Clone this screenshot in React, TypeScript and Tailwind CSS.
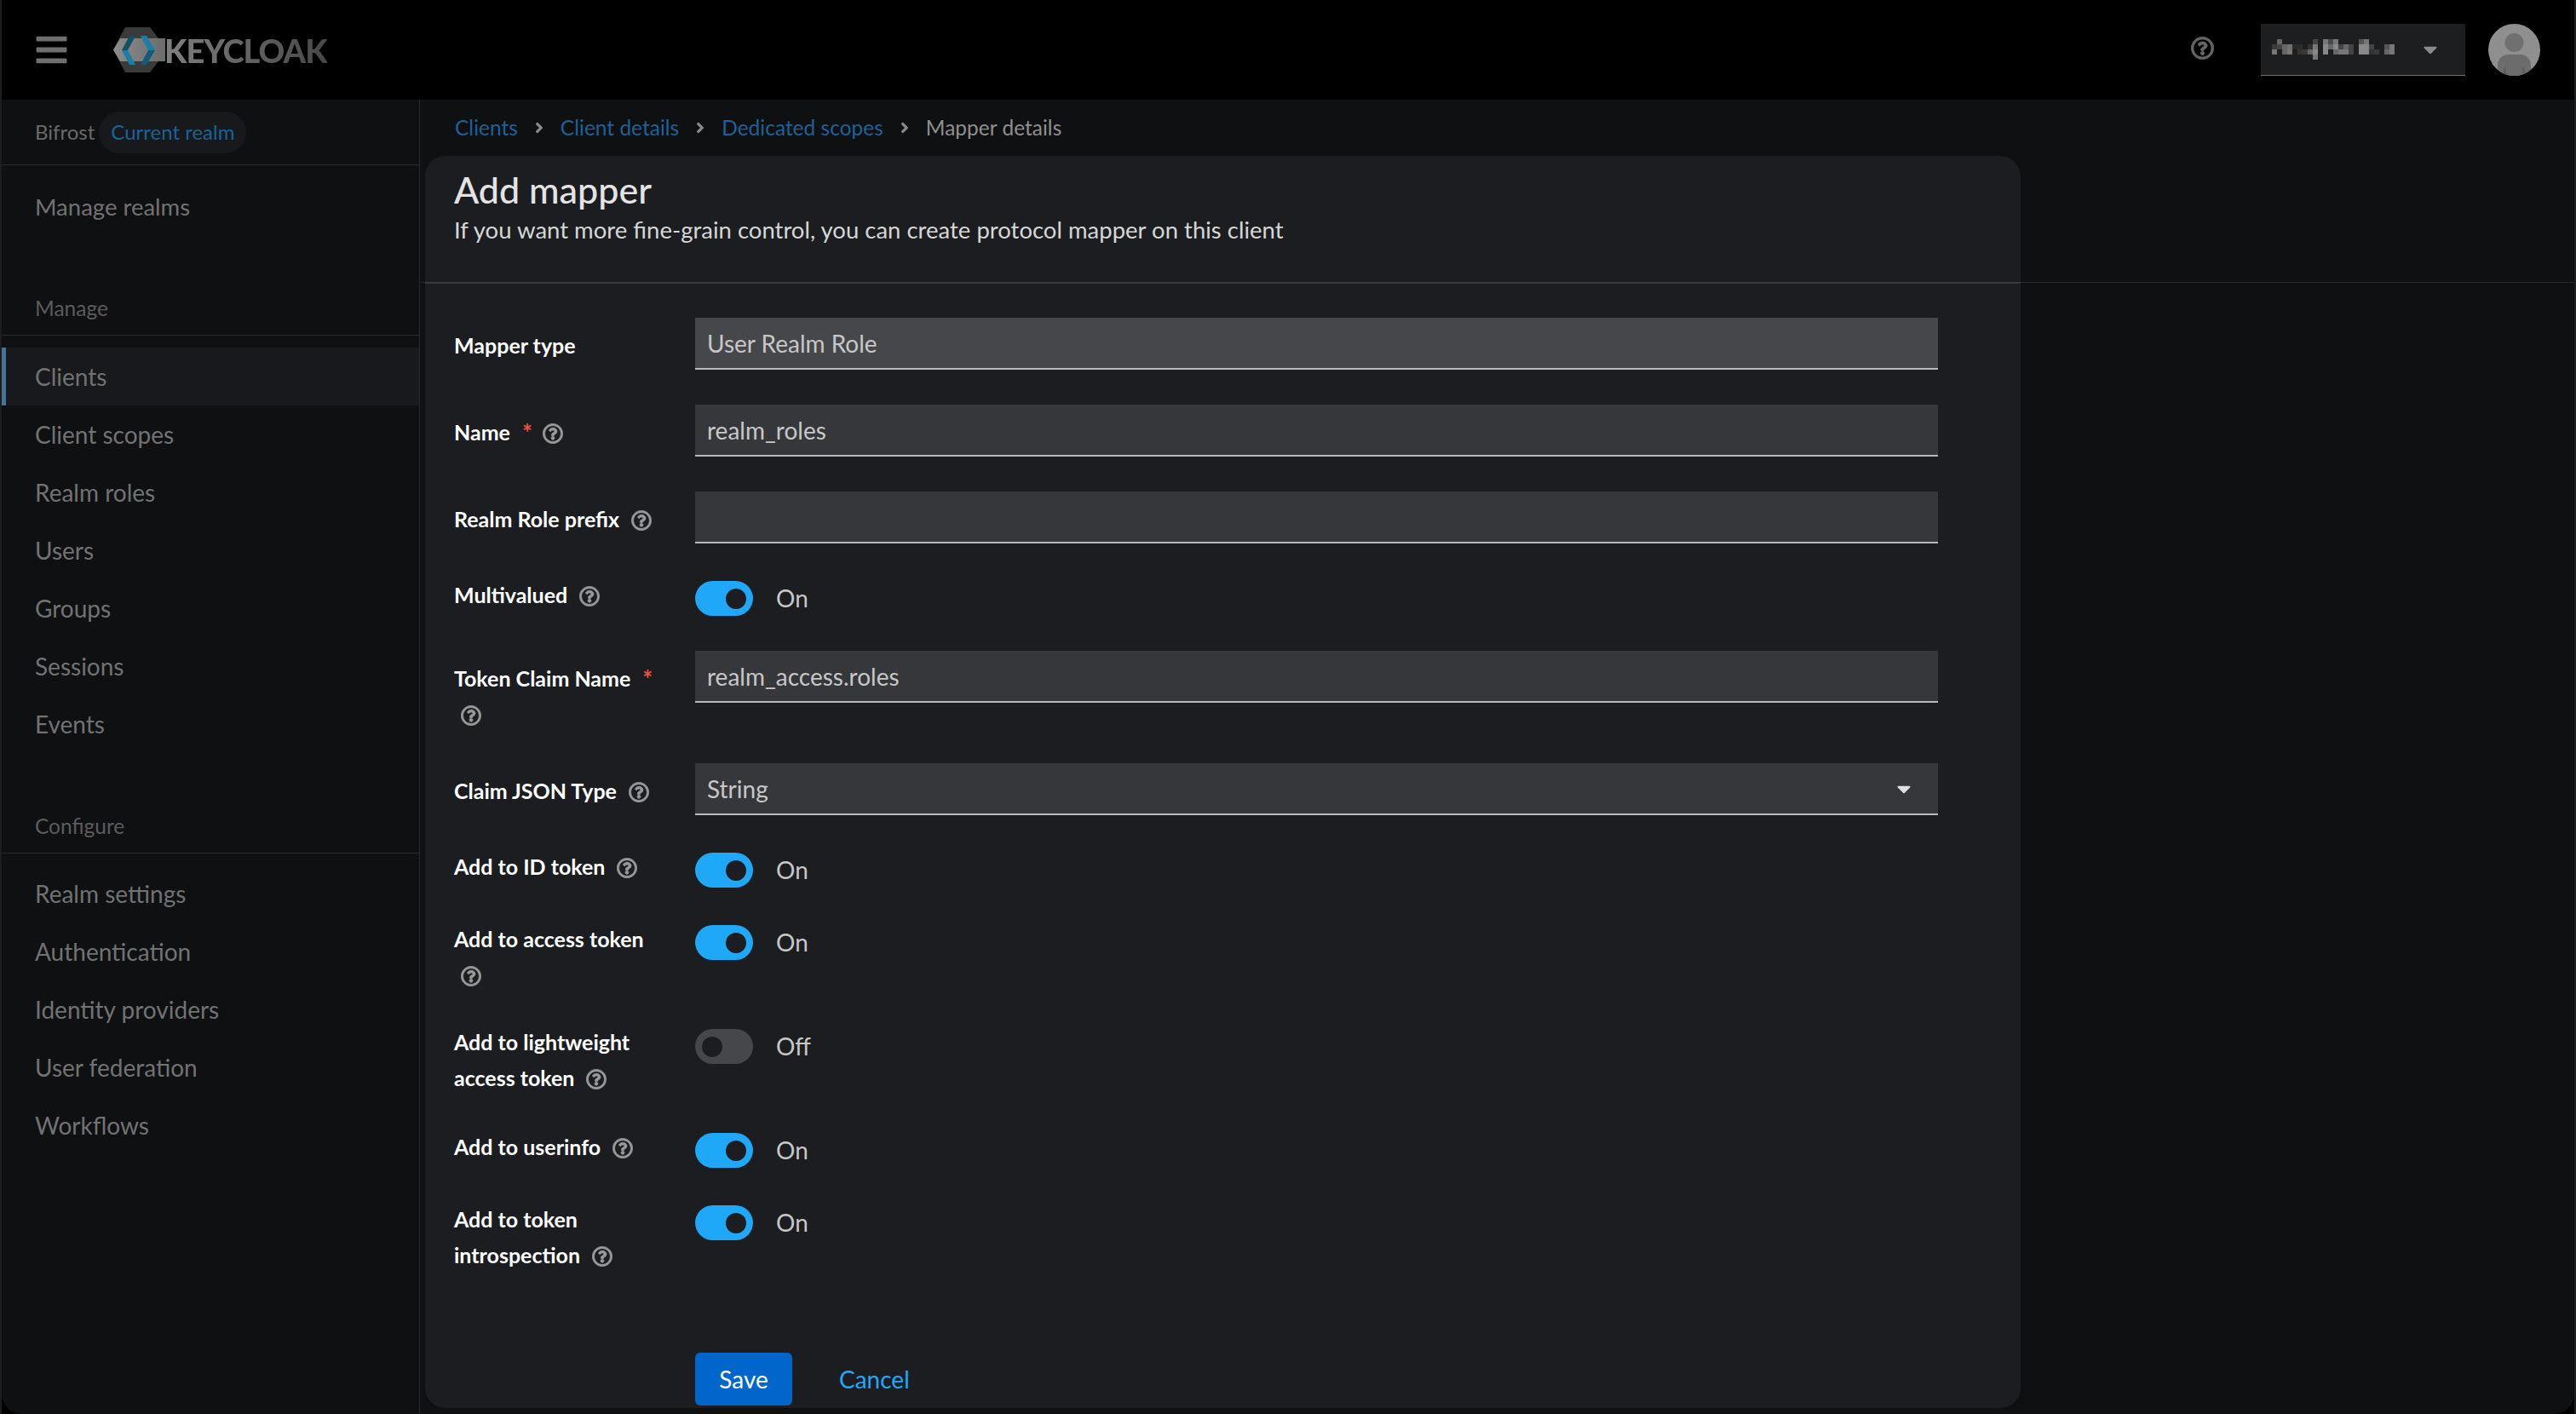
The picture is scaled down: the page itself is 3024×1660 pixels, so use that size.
import { FaBars, FaAngleRight, FaCaretDown, FaRegQuestionCircle } from "react-icons/fa";

const font = "font-['Lato','Liberation_Sans',sans-serif]";

const manageItems = ["Clients", "Client scopes", "Realm roles", "Users", "Groups", "Sessions", "Events"];
const configureItems = ["Realm settings", "Authentication", "Identity providers", "User federation", "Workflows"];

// pixelated username: [col, row, colour], one cell is 6px
const blurCells: [number, number, string][] = [
  [1, 0, "#666667"], [8, 0, "#444445"], [10, 0, "#777778"], [11, 0, "#4a4a4b"], [12, 0, "#777778"], [17, 0, "#555556"], [18, 0, "#777778"],
  [0, 1, "#3a3a3b"], [1, 1, "#444445"], [2, 1, "#666667"], [3, 1, "#707071"], [4, 1, "#2a2a2b"], [5, 1, "#2c2c2d"], [7, 1, "#333334"],
  [8, 1, "#777778"], [10, 1, "#888889"], [11, 1, "#666667"], [12, 1, "#888889"], [13, 1, "#444445"], [14, 1, "#666667"], [15, 1, "#444445"],
  [17, 1, "#888889"], [18, 1, "#888889"], [19, 1, "#444445"], [22, 1, "#555556"], [23, 1, "#777778"],
  [0, 2, "#777778"], [2, 2, "#666667"], [3, 2, "#777778"], [5, 2, "#333334"], [6, 2, "#3a3a3b"], [7, 2, "#666667"], [8, 2, "#888889"],
  [10, 2, "#888889"], [12, 2, "#666667"], [13, 2, "#777778"], [14, 2, "#777778"], [15, 2, "#444445"], [17, 2, "#888889"], [18, 2, "#888889"],
  [19, 2, "#333334"], [20, 2, "#3a3a3b"], [22, 2, "#666667"], [23, 2, "#777778"],
  [8, 3, "#777778"],
];

function Help({ className = "" }: { className?: string }) {
  return <FaRegQuestionCircle className={`mt-[3px] text-[24px] text-[#9a9a9a] shrink-0 [stroke-width:16] ${className}`} />;
}

function Toggle({ on, className = "mt-[5px]" }: { on: boolean; className?: string }) {
  return (
    <div className={`flex items-center gap-[27px] self-start ${className}`}>
      <div
        className={`flex h-[41px] w-[68px] items-center rounded-full px-[8px] ${
          on ? "bg-[#1fa7f8] justify-end" : "bg-[#46474b] justify-start"
        }`}
      >
        <div className="h-[24px] w-[24px] rounded-full bg-[#1b1d21]" />
      </div>
      <span className="text-[28px] leading-[41px] text-[#c7c7c7]">{on ? "On" : "Off"}</span>
    </div>
  );
}

function Field({ value, readOnly, caret }: { value: string; readOnly?: boolean; caret?: boolean }) {
  return (
    <div
      className={`flex h-[61px] w-[1459px] items-center justify-between border-b-2 border-[#b8bbbe] px-[14px] text-[28px] text-[#c7c7c7] ${
        readOnly ? "bg-[#46474b]" : "bg-[#36373b]"
      }`}
    >
      <span>{value}</span>
      {caret && <FaCaretDown className="mr-[13px] text-[26px] text-[#e0e0e0]" />}
    </div>
  );
}

function Label({ children, top }: { children: React.ReactNode; top?: boolean }) {
  return (
    <div className={`w-[283px] shrink-0 text-[25px] font-bold leading-[42px] text-white ${top ? "pt-[11px]" : ""}`}>
      {children}
    </div>
  );
}

function Star() {
  return <span className="ml-[14px] text-[28px] text-[#f0503f]">*</span>;
}

function NavItem({ label, active }: { label: string; active?: boolean }) {
  return (
    <div
      className={`flex h-[68px] items-center text-[28px] text-[#727272] ${
        active ? "border-l-[5px] border-[#4a7299] bg-[#18191c] pl-[34px]" : "pl-[39px]"
      }`}
    >
      {label}
    </div>
  );
}

function Sidebar() {
  return (
    <aside className="w-[491px] shrink-0 border-r border-[#26282b] bg-[#0f1012]">
      <div className="flex h-[77px] items-center gap-[5px] border-b border-[#26282b] pl-[39px] text-[24px]">
        <span className="text-[#6a6a6a]">Bifrost</span>
        <span className="flex h-[49px] items-center rounded-full bg-[#17191c] px-[14px] text-[#1c6197]">Current realm</span>
      </div>
      <div className="flex h-[98px] items-center pl-[39px] text-[27.5px] text-[#727272]">Manage realms</div>
      <div className="mt-[48px] h-[54px] border-b border-[#26282b] pl-[39px] text-[24.5px] leading-[44px] text-[#5c5c5c]">Manage</div>
      <div className="mt-[14px]">
        {manageItems.map((item) => (
          <NavItem key={item} label={item} active={item === "Clients"} />
        ))}
      </div>
      <div className="mt-[64px] h-[54px] border-b border-[#26282b] pl-[39px] text-[24.5px] leading-[44px] text-[#5c5c5c]">Configure</div>
      <div className="mt-[13px]">
        {configureItems.map((item) => (
          <NavItem key={item} label={item} />
        ))}
      </div>
    </aside>
  );
}

function Logo() {
  return (
    <div className="ml-[52px] flex items-center">
      <svg width="61" height="53" viewBox="0 0 61 53" className="shrink-0">
        <polygon points="14,0 43,0 53,13 53,40 43,53 14,53 0,26.5" fill="#3a3a3a" />
        <defs>
          <linearGradient id="banner" x1="0" x2="1" y1="0" y2="0">
            <stop offset="0" stopColor="#8c8c8c" />
            <stop offset="1" stopColor="#6c6c6c" />
          </linearGradient>
        </defs>
        <polygon points="0,26.5 8,13 61,13 61,40 8,40" fill="url(#banner)" />
        <polygon points="10,27 19,10 26,10 17,27" fill="#124f68" />
        <polygon points="10,27 17,27 26,44 19,44" fill="#1a7fa6" />
        <polygon points="32,10 39,10 49,27 41,27" fill="#1a7fa6" />
        <polygon points="41,27 49,27 39,44 32,44" fill="#135b78" />
      </svg>
      <span className="-ml-[1px] bg-gradient-to-r from-[#808080] to-[#474747] bg-clip-text text-[38px] font-black leading-none tracking-[-1px] text-transparent">
        KEYCLOAK
      </span>
    </div>
  );
}

function Header() {
  return (
    <header className="flex h-[117px] items-center bg-black pl-[38px] pr-[40px]">
      <FaBars className="text-[41px] text-[#6f6f6f]" />
      <Logo />
      <FaRegQuestionCircle className="ml-auto -mt-[4px] text-[27px] text-[#666666] [stroke-width:16]" />
      <div className="ml-[55px] flex h-[61px] w-[240px] items-center justify-between border-b border-[#6f6f6f] bg-[#1d1e20] pl-[13px] pr-[28px]">
        <svg width="150" height="24" viewBox="0 0 150 24" shapeRendering="crispEdges">
          {blurCells.map(([c, r, fill]) => (
            <rect key={`${c}-${r}`} x={c * 6} y={r * 6} width="6" height="6" fill={fill} />
          ))}
        </svg>
        <FaCaretDown className="text-[26px] text-[#8a8a8a]" />
      </div>
      <svg width="61" height="61" viewBox="0 0 61 61" className="ml-[27px] shrink-0">
        <defs>
          <clipPath id="avatar-clip">
            <circle cx="30.5" cy="30.5" r="30.5" />
          </clipPath>
        </defs>
        <g clipPath="url(#avatar-clip)">
          <rect width="61" height="61" fill="#8f8f8f" />
          <circle cx="30.5" cy="22" r="11" fill="#707070" />
          <path d="M11 61 V48 C11 41 17 36 24 36 H37 C44 36 50 41 50 48 V61 Z" fill="#6c6c6c" />
          <path d="M18 61 V54 L21 50 V61 Z M43 61 V54 L40 50 V61 Z" fill="#5e5e5e" />
        </g>
      </svg>
    </header>
  );
}

function Form() {
  return (
    <div className="px-[34px] pt-[40px]">
      <div className="flex">
        <Label top>Mapper type</Label>
        <Field value="User Realm Role" readOnly />
      </div>
      <div className="mt-[41px] flex">
        <Label top>
          <span className="inline-flex items-center">
            Name<Star /><Help className="ml-[12px]" />
          </span>
        </Label>
        <Field value="realm_roles" />
      </div>
      <div className="mt-[41px] flex">
        <Label top>
          <span className="inline-flex items-center">
            Realm Role prefix<Help className="ml-[14px]" />
          </span>
        </Label>
        <Field value="" />
      </div>
      <div className="mt-[39px] flex">
        <Label>
          <span className="inline-flex items-center">
            Multivalued<Help className="ml-[14px]" />
          </span>
        </Label>
        <Toggle on />
      </div>
      <div className="mt-[41px] flex">
        <Label top>
          <span className="flex h-[42px] items-center">
            Token Claim Name<Star />
          </span>
          <span className="flex h-[42px] items-center">
            <Help className="ml-[8px]" />
          </span>
        </Label>
        <Field value="realm_access.roles" />
      </div>
      <div className="mt-[37px] flex">
        <Label top>
          <span className="inline-flex items-center">
            Claim JSON Type<Help className="ml-[14px]" />
          </span>
        </Label>
        <Field value="String" caret />
      </div>
      <div className="mt-[39px] flex">
        <Label>
          <span className="inline-flex items-center">
            Add to ID token<Help className="ml-[14px]" />
          </span>
        </Label>
        <Toggle on />
      </div>
      <div className="mt-[39px] flex">
        <Label>
          Add to access token
          <span className="flex h-[42px] items-center">
            <Help className="ml-[8px]" />
          </span>
        </Label>
        <Toggle on />
      </div>
      <div className="mt-[37px] flex">
        <Label>
          Add to lightweight
          <span className="flex items-center">
            access token<Help className="ml-[14px]" />
          </span>
        </Label>
        <Toggle on={false} className="mt-[6px]" />
      </div>
      <div className="mt-[39px] flex">
        <Label>
          <span className="inline-flex items-center">
            Add to userinfo<Help className="ml-[14px]" />
          </span>
        </Label>
        <Toggle on />
      </div>
      <div className="mt-[39px] flex">
        <Label>
          Add to token
          <span className="flex items-center">
            introspection<Help className="ml-[14px]" />
          </span>
        </Label>
        <Toggle on />
      </div>
      <div className="ml-[283px] mt-[94px] flex items-center gap-[55px]">
        <button className="h-[62px] w-[114px] rounded-[6px] bg-[#0066cc] text-[28px] text-white">Save</button>
        <span className="text-[28px] text-[#1fa7f8]">Cancel</span>
      </div>
    </div>
  );
}

export default function App() {
  return (
    <div className={`flex h-[1660px] w-[3024px] flex-col overflow-hidden border-x-2 border-[#1c1d1f] bg-black ${font}`}>
      <Header />
      <div className="flex flex-1 overflow-hidden rounded-b-[24px] bg-[#0f1012]">
        <Sidebar />
        <main className="relative flex-1">
          <div className="absolute inset-x-0 top-[214px] h-px bg-[#26282b]" />
          <nav className="flex h-[66px] items-center pl-[41px] text-[24.5px]">
            <span className="text-[#1c6197]">Clients</span>
            <FaAngleRight className="mx-[15px] text-[20px] text-[#8a8a8a]" />
            <span className="text-[#1c6197]">Client details</span>
            <FaAngleRight className="mx-[15px] text-[20px] text-[#8a8a8a]" />
            <span className="text-[#1c6197]">Dedicated scopes</span>
            <FaAngleRight className="mx-[15px] text-[20px] text-[#8a8a8a]" />
            <span className="text-[#8f8f8f]">Mapper details</span>
          </nav>
          <section className="relative ml-[6px] h-[1470px] w-[1873px] rounded-[24px] bg-[#1b1d21]">
            <div className="h-[150px] border-b-2 border-[#37393c] px-[34px] pt-[15px]">
              <h1 className="text-[43px] font-medium leading-[50px] text-[#e4e4e4]">Add mapper</h1>
              <p className="mt-[4px] text-[27.5px] leading-[36px] text-[#d6d6d6]">
                If you want more fine-grain control, you can create protocol mapper on this client
              </p>
            </div>
            <Form />
          </section>
        </main>
      </div>
    </div>
  );
}
